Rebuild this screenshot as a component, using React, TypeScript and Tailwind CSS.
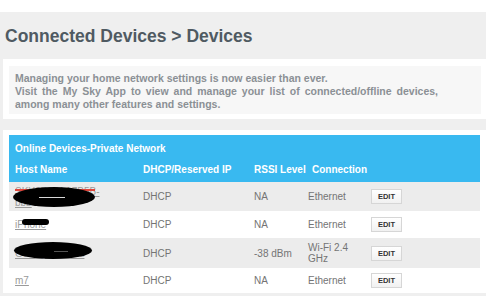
import React from 'react';

type Device = {
  host: string;
  host2?: string;
  ip: string;
  rssi: string;
  conn: string;
  h: string;
};

const devices: Device[] = [
  { host: 'SKY3E07AA7B5B-', host2: 'bbb', ip: 'DHCP', rssi: 'NA', conn: 'Ethernet', h: 'h-[29px]' },
  { host: 'iPhone', ip: 'DHCP', rssi: 'NA', conn: 'Ethernet', h: 'h-[27px]' },
  { host: 'Galaxy-S9-Plus', ip: 'DHCP', rssi: '-38 dBm', conn: 'Wi-Fi 2.4 GHz', h: 'h-[30px]' },
  { host: 'm7', ip: 'DHCP', rssi: 'NA', conn: 'Ethernet', h: 'h-[25px]' },
];

// black marker scribbles over the private host names
const Scribble: React.FC<{ i: number }> = ({ i }) => {
  if (i === 0)
    return (
      <>
        <span className="absolute left-[6px] top-[7px] h-[2px] w-[80px] bg-[#e0453a]" />
        <span className="absolute left-[4px] top-[5px] h-[20px] w-[82px] rounded-[50%] bg-black" />
        <span className="absolute left-[30px] top-[15px] h-[1px] w-[26px] bg-[#d9d9d9]" />
      </>
    );
  if (i === 1)
    return <span className="absolute left-[13px] top-[8px] h-[6px] w-[27px] rounded-full bg-black" />;
  if (i === 2)
    return (
      <>
        <span className="absolute left-[5px] top-[4px] h-[17px] w-[78px] rounded-[50%] bg-black" />
        <span className="absolute left-[45px] top-[13px] h-[1px] w-[14px] bg-[#555]" />
      </>
    );
  return null;
};

export default function App() {
  return (
    <div className="w-[486px] h-[296px] overflow-hidden bg-white font-['Liberation_Sans',Arial,sans-serif]">
      <div className="mt-[12px] h-[284px] bg-[#efefef]">
        <h1 className="pl-[5px] pt-[12px] pb-[11px] text-[17.5px] leading-[24px] font-bold text-[#4f5a62]">
          Connected Devices &gt; Devices
        </h1>

        <div className="ml-[3px] bg-white pt-[7px] pb-[5px] pl-[6px] pr-[5px]">
          <div className="bg-[#f7f7f7] pl-[6px] pt-[6px] pb-[3px]">
            <p className="w-[423px] text-justify text-[10.5px] leading-[13px] font-bold text-[#8b9095]">
              Managing your home network settings is now easier than ever.
              <br />
              Visit the My Sky App to view and manage your list of connected/offline devices, among many other
              features and settings.
            </p>
          </div>
        </div>

        <div className="ml-[3px] mt-[11px] bg-white pt-[5px] pl-[6px] pr-[6px]">
          <table className="w-[471px] table-fixed border-collapse text-[10px] leading-[11px]">
            <colgroup>
              <col className="w-[128px]" />
              <col className="w-[112px]" />
              <col className="w-[57px]" />
              <col className="w-[60px]" />
              <col />
            </colgroup>
            <thead className="bg-[#39b9f0] text-white font-bold">
              <tr>
                <th colSpan={5} className="pl-[6px] pt-[7px] text-left leading-[14px]">
                  Online Devices-Private Network
                </th>
              </tr>
              <tr className="text-left">
                <th className="pl-[6px] pt-[7px] pb-[5px] leading-[14px]">Host Name</th>
                <th className="pl-[6px] pt-[7px] pb-[5px] leading-[14px]">DHCP/Reserved IP</th>
                <th className="pl-[5px] pt-[7px] pb-[5px] leading-[14px] whitespace-nowrap">RSSI Level</th>
                <th className="pl-[6px] pt-[7px] pb-[5px] leading-[14px]">Connection</th>
                <th />
              </tr>
            </thead>
            <tbody className="text-[#747474]">
              {devices.map((d, i) => (
                <tr key={i} className={`${d.h} ${i % 2 === 0 ? 'bg-[#ececec]' : 'bg-white'}`}>
                  <td className="relative pl-[6px] align-middle">
                    <a href="#" className="text-[#9a9a9a] underline">
                      {d.host}
                      {d.host2 && (
                        <>
                          <br />
                          {d.host2}
                        </>
                      )}
                    </a>
                    <Scribble i={i} />
                  </td>
                  <td className="pl-[6px]">{d.ip}</td>
                  <td className="pl-[5px]">{d.rssi}</td>
                  <td className="pl-[2px] pr-[6px]">{d.conn}</td>
                  <td className="pl-[5px]">
                    <button className="h-[15px] w-[31px] border border-[#d6d6d6] bg-gradient-to-b from-white to-[#f1f1f1] text-[7.5px] font-bold leading-[13px] text-[#333]">
                      EDIT
                    </button>
                  </td>
                </tr>
              ))}
            </tbody>
          </table>
        </div>
      </div>
    </div>
  );
}
